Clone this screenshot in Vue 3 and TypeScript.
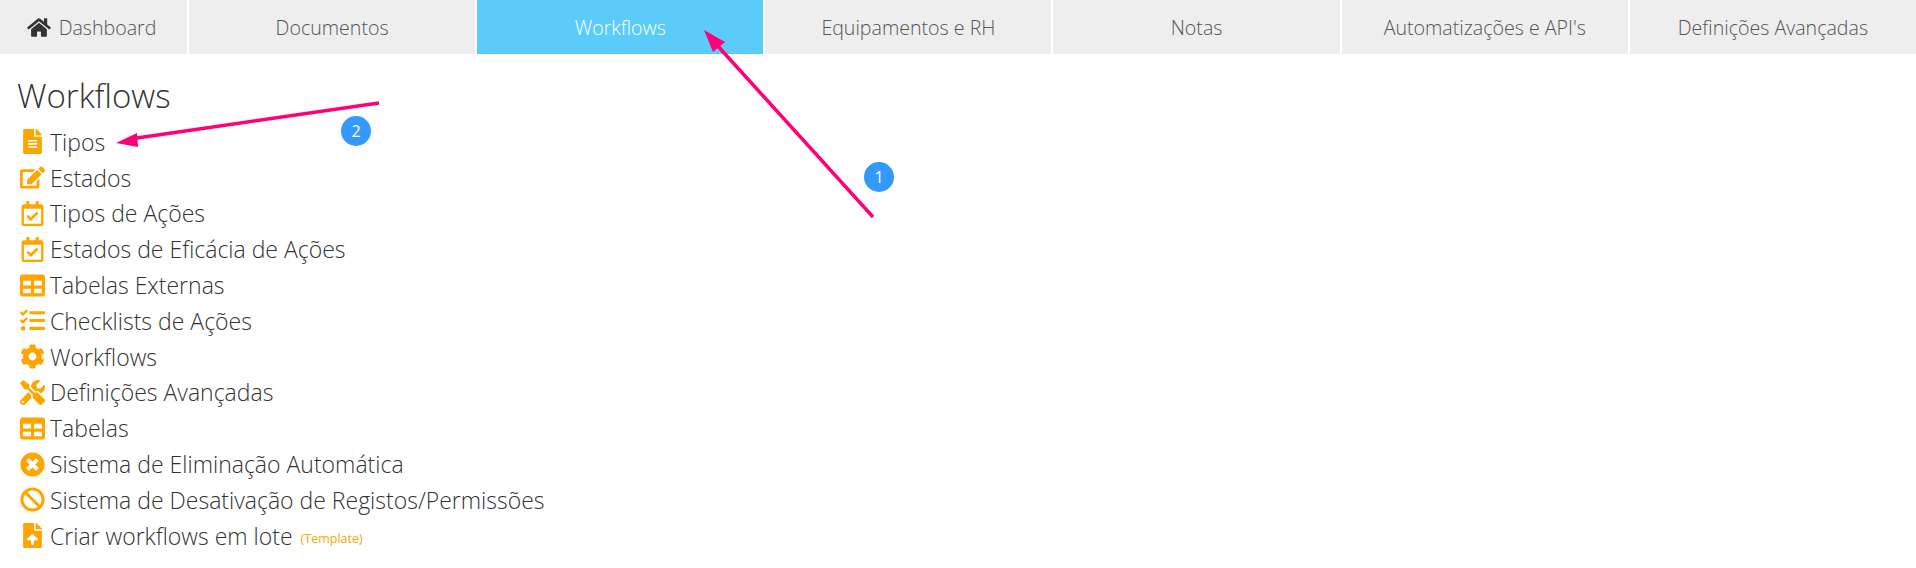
<script setup lang="ts">
const tabs = [
  { label: 'Dashboard', home: true },
  { label: 'Documentos' },
  { label: 'Workflows', active: true },
  { label: 'Equipamentos e RH' },
  { label: 'Notas' },
  { label: "Automatizações e API's" },
  { label: 'Definições Avançadas' }
]

const homePath = 'M280.37 148.26L96 300.11V464a16 16 0 0 0 16 16l112.06-.29a16 16 0 0 0 15.92-16V368a16 16 0 0 1 16-16h64a16 16 0 0 1 16 16v95.64a16 16 0 0 0 16 16.05L464 480a16 16 0 0 0 16-16V300L295.67 148.26a12.19 12.19 0 0 0-15.3 0zM571.6 251.47L488 182.56V44.05a12 12 0 0 0-12-12h-56a12 12 0 0 0-12 12v72.61L318.47 43a48 48 0 0 0-61 0L4.34 251.47a12 12 0 0 0-1.6 16.9l25.5 31A12 12 0 0 0 45.15 301l235.22-193.74a12.19 12.19 0 0 1 15.3 0L530.9 301a12 12 0 0 0 16.9-1.6l25.5-31a12 12 0 0 0-1.7-16.93z'

const icons: Record<string, { box: string; d: string }> = {
  file: {
    box: '0 0 384 512',
    d: 'M224 136V0H24C10.7 0 0 10.7 0 24v464c0 13.3 10.7 24 24 24h336c13.3 0 24-10.7 24-24V160H248c-13.2 0-24-10.8-24-24zm64 236c0 6.6-5.4 12-12 12H108c-6.6 0-12-5.4-12-12v-8c0-6.6 5.4-12 12-12h168c6.6 0 12 5.4 12 12v8zm0-64c0 6.6-5.4 12-12 12H108c-6.6 0-12-5.4-12-12v-8c0-6.6 5.4-12 12-12h168c6.6 0 12 5.4 12 12v8zm0-72v8c0 6.6-5.4 12-12 12H108c-6.6 0-12-5.4-12-12v-8c0-6.6 5.4-12 12-12h168c6.6 0 12 5.4 12 12zm96-114.1v6.1H256V0h6.1c6.4 0 12.5 2.5 17 7l97.9 98c4.5 4.5 7 10.6 7 16.9z'
  },
  edit: {
    box: '0 0 576 512',
    d: 'M402.6 83.2l90.2 90.2c3.8 3.8 3.8 10 0 13.8L274.4 405.6l-92.8 10.3c-12.4 1.4-22.9-9.1-21.5-21.5l10.3-92.8L388.8 83.2c3.8-3.8 10-3.8 13.8 0zm162-22.9l-48.8-48.8c-15.2-15.2-39.9-15.2-55.2 0l-35.4 35.4c-3.8 3.8-3.8 10 0 13.8l90.2 90.2c3.8 3.8 10 3.8 13.8 0l35.4-35.4c15.2-15.3 15.2-40 0-55.2zM384 346.2V448H64V128h229.8c3.2 0 6.2-1.3 8.5-3.5l40-40c7.6-7.6 2.2-20.5-8.5-20.5H48C21.5 64 0 85.5 0 112v352c0 26.5 21.5 48 48 48h352c26.5 0 48-21.5 48-48V306.2c0-10.7-12.9-16-20.5-8.5l-40 40c-2.2 2.3-3.5 5.3-3.5 8.5z'
  },
  calendar: {
    box: '0 0 448 512',
    d: 'M400 64h-48V12c0-6.6-5.4-12-12-12h-40c-6.6 0-12 5.4-12 12v52H160V12c0-6.6-5.4-12-12-12h-40c-6.6 0-12 5.4-12 12v52H48C21.5 64 0 85.5 0 112v352c0 26.5 21.5 48 48 48h352c26.5 0 48-21.5 48-48V112c0-26.5-21.5-48-48-48zm-6 400H54c-3.3 0-6-2.7-6-6V160h352v298c0 3.3-2.7 6-6 6zm-52.849-200.65L198.842 404.519c-4.705 4.667-12.303 4.637-16.971-.068l-75.091-75.699c-4.667-4.705-4.637-12.303.068-16.971l22.719-22.536c4.705-4.667 12.303-4.637 16.971.068l44.104 44.461 111.072-110.181c4.705-4.667 12.303-4.637 16.971.068l22.536 22.718c4.667 4.705 4.636 12.303-.069 16.97z'
  },
  table: {
    box: '0 0 512 512',
    d: 'M464 32H48C21.49 32 0 53.49 0 80v352c0 26.51 21.49 48 48 48h416c26.51 0 48-21.49 48-48V80c0-26.51-21.49-48-48-48zM224 416H64v-96h160v96zm0-160H64v-96h160v96zm224 160H288v-96h160v96zm0-160H288v-96h160v96z'
  },
  tasks: {
    box: '0 0 512 512',
    d: 'M139.61 35.5a12 12 0 0 0-17 0L58.93 98.81l-22.7-22.12a12 12 0 0 0-17 0L3.53 92.41a12 12 0 0 0 0 17l47.59 47.4a12.78 12.78 0 0 0 17.61 0l15.59-15.62L156.52 69a12.09 12.09 0 0 0 .09-17zm0 159.19a12 12 0 0 0-17 0l-63.68 63.72-22.7-22.1a12 12 0 0 0-17 0L3.53 252a12 12 0 0 0 0 17L51 316.5a12.77 12.77 0 0 0 17.6 0l15.7-15.69 72.2-72.22a12 12 0 0 0 .09-16.9zM64 368c-26.49 0-48.59 21.5-48.59 48S37.53 464 64 464a48 48 0 0 0 0-96zm432 16H208a16 16 0 0 0-16 16v32a16 16 0 0 0 16 16h288a16 16 0 0 0 16-16v-32a16 16 0 0 0-16-16zm0-320H208a16 16 0 0 0-16 16v32a16 16 0 0 0 16 16h288a16 16 0 0 0 16-16V80a16 16 0 0 0-16-16zm0 160H208a16 16 0 0 0-16 16v32a16 16 0 0 0 16 16h288a16 16 0 0 0 16-16v-32a16 16 0 0 0-16-16z'
  },
  cog: {
    box: '0 0 512 512',
    d: 'M487.4 315.7l-42.6-24.6c4.3-23.2 4.3-47 0-70.2l42.6-24.6c4.9-2.8 7.1-8.6 5.5-14-11.1-35.6-30-67.8-54.7-94.6-3.8-4.1-10-5.1-14.8-2.3L380.8 110c-17.9-15.4-38.5-27.3-60.8-35.1V25.8c0-5.6-3.9-10.5-9.4-11.7-36.7-8.2-74.3-7.8-109.2 0-5.5 1.2-9.4 6.1-9.4 11.7V75c-22.2 7.9-42.8 19.8-60.8 35.1L88.7 85.5c-4.9-2.8-11-1.9-14.8 2.3-24.7 26.7-43.6 58.9-54.7 94.6-1.7 5.4.6 11.2 5.5 14L67.3 221c-4.3 23.2-4.3 47 0 70.2l-42.6 24.6c-4.9 2.8-7.1 8.6-5.5 14 11.1 35.6 30 67.8 54.7 94.6 3.8 4.1 10 5.1 14.8 2.3l42.6-24.6c17.9 15.4 38.5 27.3 60.8 35.1v49.2c0 5.6 3.9 10.5 9.4 11.7 36.7 8.2 74.3 7.8 109.2 0 5.5-1.2 9.4-6.1 9.4-11.7v-49.2c22.2-7.9 42.8-19.8 60.8-35.1l42.6 24.6c4.9 2.8 11 1.9 14.8-2.3 24.7-26.7 43.6-58.9 54.7-94.6 1.5-5.5-.7-11.3-5.6-14.1zM256 336c-44.1 0-80-35.9-80-80s35.9-80 80-80 80 35.9 80 80-35.9 80-80 80z'
  },
  tools: {
    box: '0 0 512 512',
    d: 'M501.1 395.7L384 278.6c-23.1-23.1-57.6-27.6-85.4-13.9L192 158.1V96L64 0 0 64l96 128h62.1l106.6 106.6c-13.6 27.8-9.2 62.3 13.9 85.4l117.1 117.1c14.6 14.6 38.2 14.6 52.7 0l52.7-52.7c14.5-14.6 14.5-38.2 0-52.7zM331.7 225c28.3 0 54.9 11 74.9 31l19.4 19.4c15.8-6.9 30.8-16.5 43.8-29.5 37.1-37.1 49.7-89.3 37.9-136.7-2.2-9-13.5-12.1-20.1-5.5l-74.4 74.4-67.9-11.3L334 98.9l74.4-74.4c6.6-6.6 3.4-17.9-5.7-20.2-47.4-11.7-99.6.9-136.6 37.9-28.5 28.5-41.9 66.1-41.2 103.6l82.1 82.1c8.1-1.9 16.5-2.9 24.7-2.9zm-103.9 82l-56.7-56.7L18.7 402.8c-25 25-25 65.5 0 90.5s65.5 25 90.5 0l123.6-123.6c-7.6-19.9-9.9-41.6-5-62.7zM64 472c-13.2 0-24-10.8-24-24 0-13.3 10.7-24 24-24s24 10.7 24 24c0 13.2-10.7 24-24 24z'
  },
  times: {
    box: '0 0 512 512',
    d: 'M256 8C119 8 8 119 8 256s111 248 248 248 248-111 248-248S393 8 256 8zm121.6 313.1c4.7 4.7 4.7 12.3 0 17L338 377.6c-4.7 4.7-12.3 4.7-17 0L256 312l-65.1 65.6c-4.7 4.7-12.3 4.7-17 0L134.4 338c-4.7-4.7-4.7-12.3 0-17l65.6-65-65.6-65.1c-4.7-4.7-4.7-12.3 0-17l39.6-39.6c4.7-4.7 12.3-4.7 17 0l65 65.7 65.1-65.6c4.7-4.7 12.3-4.7 17 0l39.6 39.6c4.7 4.7 4.7 12.3 0 17L312 256l65.6 65.1z'
  },
  ban: {
    box: '0 0 512 512',
    d: 'M256 8C119.034 8 8 119.033 8 256s111.034 248 248 248 248-111.034 248-248S392.967 8 256 8zm130.108 117.892c65.448 65.448 70 165.481 20.677 235.637L150.47 105.216c70.204-49.356 170.226-44.735 235.638 20.676zM125.892 386.108c-65.448-65.448-70-165.481-20.677-235.637L361.53 406.784c-70.203 49.356-170.226 44.736-235.638-20.676z'
  },
  upload: {
    box: '0 0 384 512',
    d: 'M224 136V0H24C10.7 0 0 10.7 0 24v464c0 13.3 10.7 24 24 24h336c13.3 0 24-10.7 24-24V160H248c-13.2 0-24-10.8-24-24zm65.18 216.01H224v80c0 8.84-7.16 16-16 16h-32c-8.84 0-16-7.16-16-16v-80H94.82c-14.28 0-21.41-17.29-11.27-27.36l96.42-95.7c6.65-6.61 17.39-6.61 24.04 0l96.42 95.7c10.15 10.07 3.03 27.36-11.25 27.36zM377 105L279.1 7c-4.5-4.5-10.6-7-17-7H256v128h128v-6.1c0-6.3-2.5-12.4-7-16.9z'
  }
}

const items = [
  { icon: 'file', label: 'Tipos' },
  { icon: 'edit', label: 'Estados' },
  { icon: 'calendar', label: 'Tipos de Ações' },
  { icon: 'calendar', label: 'Estados de Eficácia de Ações' },
  { icon: 'table', label: 'Tabelas Externas' },
  { icon: 'tasks', label: 'Checklists de Ações' },
  { icon: 'cog', label: 'Workflows' },
  { icon: 'tools', label: 'Definições Avançadas' },
  { icon: 'table', label: 'Tabelas' },
  { icon: 'times', label: 'Sistema de Eliminação Automática' },
  { icon: 'ban', label: 'Sistema de Desativação de Registos/Permissões' },
  { icon: 'upload', label: 'Criar workflows em lote', note: '(Template)' }
]
</script>

<template>
  <div class="page">
    <nav class="tabs">
      <a v-for="tab in tabs" :key="tab.label" class="tab" :class="{ active: tab.active }">
        <svg v-if="tab.home" class="home" viewBox="0 0 576 512"><path :d="homePath" /></svg>
        {{ tab.label }}
      </a>
    </nav>

    <main class="content">
      <h1>Workflows</h1>
      <ul class="list">
        <li v-for="item in items" :key="item.label">
          <svg class="icon" :viewBox="icons[item.icon].box"><path :d="icons[item.icon].d" /></svg>
          <span>{{ item.label }}</span>
          <small v-if="item.note">{{ item.note }}</small>
        </li>
      </ul>
    </main>

    <!-- annotations drawn over the screenshot -->
    <svg class="arrows" viewBox="0 0 1916 568">
      <path d="M873 217L716 44" />
      <path d="M379 103L130 139" />
      <polygon points="704,30 725,42 713,52" />
      <polygon points="116,143 137,133 138,147" />
    </svg>
    <span class="badge one">1</span>
    <span class="badge two">2</span>
  </div>
</template>

<style scoped>
.page {
  position: relative;
  width: 1916px;
  height: 568px;
  overflow: hidden;
  background: #fff;
  font-family: "Open Sans", "Noto Sans", sans-serif;
  font-weight: 300;
  color: #333;
}

.tabs {
  display: grid;
  grid-template-columns: 187px repeat(6, 1fr);
  gap: 2px;
  height: 54px;
}

.tab {
  display: flex;
  align-items: center;
  justify-content: center;
  gap: 8px;
  background: #eee;
  font-size: 19.6px;
  color: #555;
}

.tab.active {
  background: #5bcbf9;
  color: #fff;
}

.home {
  width: 24px;
  height: 21px;
  margin-left: -4px;
  fill: #333;
}

.content {
  padding: 20px 0 0 17px;
}

h1 {
  margin: 0 0 6px;
  font-size: 33px;
  font-weight: 300;
  line-height: 44px;
}

.list {
  margin: 0;
  padding: 0 0 0 3px;
  list-style: none;
}

.list li {
  display: flex;
  align-items: center;
  gap: 5px;
  height: 35.8px;
  font-size: 23px;
  white-space: nowrap;
}

.icon {
  flex: none;
  width: 25px;
  height: 25px;
  fill: #ffa500;
}

.list small {
  margin: 5px 0 0 3px;
  font-size: 12.5px;
  font-weight: 400;
  color: #ffa500;
}

.arrows {
  position: absolute;
  inset: 0;
  width: 1916px;
  height: 568px;
  pointer-events: none;
}

.arrows path {
  fill: none;
  stroke: #ff0078;
  stroke-width: 3.5;
}

.arrows polygon {
  fill: #ff0078;
}

.badge {
  position: absolute;
  display: flex;
  align-items: center;
  justify-content: center;
  width: 30px;
  height: 30px;
  border-radius: 50%;
  background: #3399ff;
  color: #fff;
  font-size: 16px;
  font-weight: 400;
}

.badge.one {
  left: 864px;
  top: 162px;
}

.badge.two {
  left: 341px;
  top: 116px;
}
</style>
